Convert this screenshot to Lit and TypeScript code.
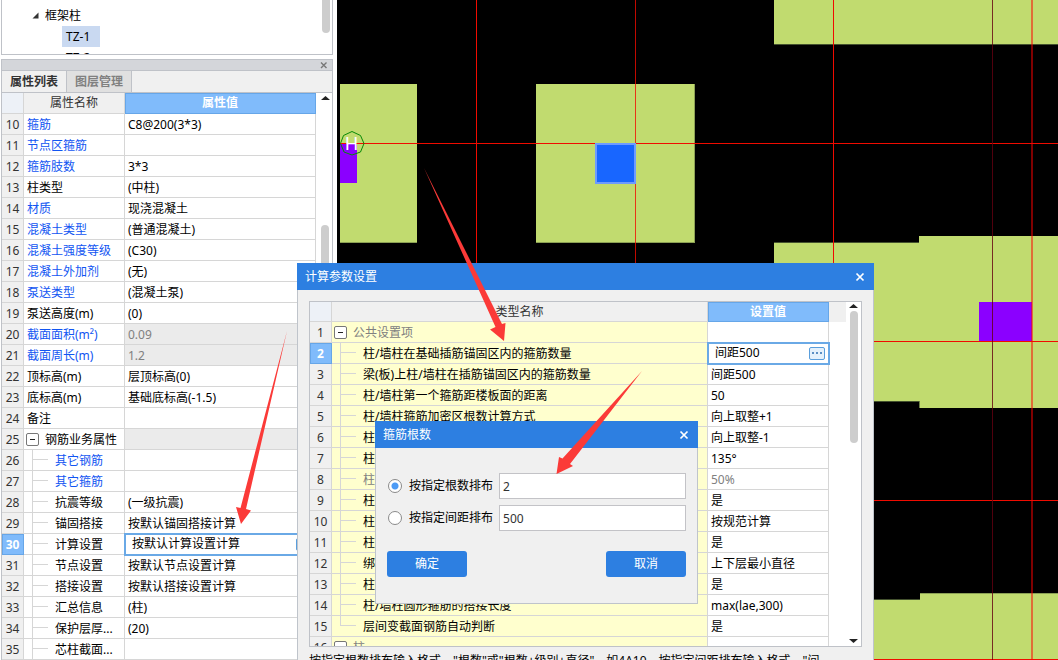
import { LitElement, html, css, svg, nothing } from "lit";
import { customElement, property } from "lit/decorators.js";
import { classMap } from "lit/directives/class-map.js";

interface Row {
  n: number;
  name: string;
  value?: string;
  link?: boolean;
  locked?: boolean;
  group?: boolean;
  child?: boolean;
  last?: boolean;
  muted?: boolean;
  selected?: boolean;
}

const PROPERTIES: Row[] = [
  { n: 10, name: "箍筋", value: "C8@200(3*3)", link: true },
  { n: 11, name: "节点区箍筋", link: true },
  { n: 12, name: "箍筋肢数", value: "3*3", link: true },
  { n: 13, name: "柱类型", value: "(中柱)" },
  { n: 14, name: "材质", value: "现浇混凝土", link: true },
  { n: 15, name: "混凝土类型", value: "(普通混凝土)", link: true },
  { n: 16, name: "混凝土强度等级", value: "(C30)", link: true },
  { n: 17, name: "混凝土外加剂", value: "(无)", link: true },
  { n: 18, name: "泵送类型", value: "(混凝土泵)", link: true },
  { n: 19, name: "泵送高度(m)", value: "(0)" },
  { n: 20, name: "截面面积(m²)", value: "0.09", link: true, locked: true },
  { n: 21, name: "截面周长(m)", value: "1.2", link: true, locked: true },
  { n: 22, name: "顶标高(m)", value: "层顶标高(0)" },
  { n: 23, name: "底标高(m)", value: "基础底标高(-1.5)" },
  { n: 24, name: "备注" },
  { n: 25, name: "钢筋业务属性", group: true, locked: true },
  { n: 26, name: "其它钢筋", link: true, child: true },
  { n: 27, name: "其它箍筋", link: true, child: true },
  { n: 28, name: "抗震等级", value: "(一级抗震)", child: true },
  { n: 29, name: "锚固搭接", value: "按默认锚固搭接计算", child: true },
  { n: 30, name: "计算设置", value: "按默认计算设置计算", child: true, selected: true },
  { n: 31, name: "节点设置", value: "按默认节点设置计算", child: true },
  { n: 32, name: "搭接设置", value: "按默认搭接设置计算", child: true },
  { n: 33, name: "汇总信息", value: "(柱)", child: true },
  { n: 34, name: "保护层厚...", value: "(20)", child: true },
  { n: 35, name: "芯柱截面...", child: true },
];

const SETTINGS: Row[] = [
  { n: 1, name: "公共设置项", group: true, muted: true },
  { n: 2, name: "柱/墙柱在基础插筋锚固区内的箍筋数量", value: "间距500", child: true, selected: true },
  { n: 3, name: "梁(板)上柱/墙柱在插筋锚固区内的箍筋数量", value: "间距500", child: true },
  { n: 4, name: "柱/墙柱第一个箍筋距楼板面的距离", value: "50", child: true },
  { n: 5, name: "柱/墙柱箍筋加密区根数计算方式", value: "向上取整+1", child: true },
  { n: 6, name: "柱", value: "向上取整-1", child: true },
  { n: 7, name: "柱", value: "135°", child: true },
  { n: 8, name: "柱", value: "50%", child: true, muted: true },
  { n: 9, name: "柱", value: "是", child: true },
  { n: 10, name: "柱", value: "按规范计算", child: true },
  { n: 11, name: "柱", value: "是", child: true },
  { n: 12, name: "绑", value: "上下层最小直径", child: true },
  { n: 13, name: "柱", value: "是", child: true },
  { n: 14, name: "柱/墙柱圆形箍筋的搭接长度", value: "max(lae,300)", child: true },
  { n: 15, name: "层间变截面钢筋自动判断", value: "是", child: true, last: true },
  { n: 16, name: "柱", group: true, muted: true },
];

const base = css`
  * {
    box-sizing: border-box;
  }
  button,
  input {
    font: inherit;
    color: inherit;
    margin: 0;
    padding: 0;
    border: 0;
    background: none;
  }
`;

@customElement("grid-table")
export class GridTable extends LitElement {
  @property({ attribute: false }) rows: Row[] = [];
  @property() nameTitle = "";
  @property() valueTitle = "";
  @property({ reflect: true }) kind = "props";

  static styles = [
    base,
    css`
      :host {
        display: block;
        min-width: 0;
      }
      table {
        width: 100%;
        table-layout: fixed;
        border-spacing: 0;
      }
      .c-num {
        width: 22px;
      }
      .c-value {
        width: 191px;
      }
      :host([kind="settings"]) .c-value {
        width: 121px;
      }
      th,
      td {
        height: 21px;
        padding: 0;
        line-height: 20px;
        font-weight: 400;
        text-align: left;
        white-space: nowrap;
        overflow: hidden;
        border-right: 1px solid #d6d6d6;
        border-bottom: 1px solid #d6d6d6;
        background: #fff;
      }
      thead th {
        text-align: center;
        color: #333;
        background: #f0f0f0;
      }
      :host([kind="settings"]) thead th {
        height: 20px;
        line-height: 19px;
      }
      thead .corner {
        background: #edf1f7;
      }
      thead .value {
        color: #fff;
        font-weight: 700;
        background: #80bbfb;
        box-shadow: inset 1px 1px 0 #66a6e8;
        border-color: #66a6e8;
      }
      .num {
        padding-top: 2px;
        line-height: 18px;
        text-align: center;
        color: #333;
        background: #f0f0f0;
      }
      .num.selected {
        color: #fff;
        font-weight: 700;
        background: #80bbfb;
        box-shadow: inset 1px 1px 0 #66a6e8;
        border-color: #66a6e8;
      }
      .inner {
        display: flex;
        align-items: center;
        height: 20px;
        padding-left: 3px;
      }
      .text {
        padding-top: 2px;
        line-height: 18px;
      }
      :host([kind="settings"]) .name {
        background: #ffffce;
      }
      .link {
        color: #1155f2;
      }
      .muted,
      .value.locked {
        color: #808080;
      }
      .value.locked {
        background: #ebebeb;
      }
      .name .group {
        gap: 6px;
        padding-left: 2px;
      }
      .name .child {
        padding-left: 8px;
      }
      .branch {
        flex: none;
        width: 16px;
        height: 20px;
        margin-right: 7px;
        background: linear-gradient(#d6d6d6, #d6d6d6) 0 9px / 16px 1px no-repeat;
        border-left: 1px solid #d6d6d6;
      }
      .branch.last {
        height: 10px;
        align-self: flex-start;
      }
      .toggle {
        flex: none;
        width: 13px;
        height: 13px;
        border: 1px solid #777;
        border-radius: 2px;
        background: linear-gradient(#222, #222) center / 5px 1px no-repeat #fff;
      }
      td.value.selected {
        overflow: visible;
        outline: 2px solid #6aa9e6;
        outline-offset: -1px;
      }
      .editor {
        flex: 1;
        min-width: 0;
        height: 18px;
        padding-left: 4px;
        outline: none;
      }
      .more {
        display: flex;
        flex: none;
        align-items: center;
        justify-content: center;
        gap: 2px;
        width: 16px;
        height: 13px;
        margin-right: 3px;
        border: 1px solid #5a9edc;
        border-radius: 2px;
        background: #e4f1fc;
      }
      .more i {
        width: 2px;
        height: 2px;
        background: #5b8fc4;
      }
    `,
  ];

  private renderRow(r: Row) {
    return html`<tr>
      <td class=${classMap({ num: true, selected: !!r.selected })}>${r.n}</td>
      <td class="name">
        <div
          class=${classMap({
            inner: true,
            group: !!r.group,
            child: !!r.child,
            link: !!r.link,
            muted: !!r.muted,
          })}
        >
          ${r.group ? html`<button class="toggle" aria-label="折叠"></button>` : nothing}
          ${r.child ? html`<span class=${classMap({ branch: true, last: !!r.last })}></span>` : nothing}<span
            class="text"
            >${r.name}</span
          >
        </div>
      </td>
      <td class=${classMap({ value: true, locked: !!r.locked, selected: !!r.selected, muted: !!r.muted })}>
        <div class="inner">
          ${r.selected
            ? html`<input class="editor" type="text" aria-label=${r.name} .value=${r.value ?? ""} />
                <button class="more" aria-label="更多"><i></i><i></i><i></i></button>`
            : html`<span class="text">${r.value ?? nothing}</span>`}
        </div>
      </td>
    </tr>`;
  }

  render() {
    return html`<table>
      <colgroup>
        <col class="c-num" />
        <col />
        <col class="c-value" />
      </colgroup>
      <thead>
        <tr>
          <th class="corner"></th>
          <th>${this.nameTitle}</th>
          <th class="value">${this.valueTitle}</th>
        </tr>
      </thead>
      <tbody>
        ${this.rows.map((r) => this.renderRow(r))}
      </tbody>
    </table>`;
  }
}

@customElement("dialog-window")
export class DialogWindow extends LitElement {
  @property() heading = "";

  static styles = [
    base,
    css`
      :host {
        display: flex;
        flex-direction: column;
        background: #f0f0f0;
      }
      .bar {
        display: flex;
        flex: none;
        align-items: center;
        justify-content: space-between;
        height: 27px;
        padding: 0 8px;
        color: #fff;
        background: #2d7fe1;
      }
      .close {
        display: flex;
        align-items: center;
        justify-content: center;
        width: 12px;
        height: 12px;
      }
      .body {
        flex: 1;
        min-height: 0;
        border: 1px solid #bfc4cb;
        border-top: 0;
      }
    `,
  ];

  render() {
    return html`<div class="bar">
        <span>${this.heading}</span>
        <button class="close" aria-label="关闭">
          <svg width="10" height="10" viewBox="0 0 10 10">
            <path d="M1.5 1.5 8.5 8.5M8.5 1.5 1.5 8.5" stroke="#fff" stroke-width="1.7" />
          </svg>
        </button>
      </div>
      <div class="body"><slot></slot></div>`;
  }
}

@customElement("model-canvas")
export class ModelCanvas extends LitElement {
  static styles = css`
    :host {
      display: block;
      background: #000;
      overflow: hidden;
    }
    svg {
      display: block;
      width: 100%;
      height: 100%;
    }
    .slab {
      fill: #c1db6f;
    }
    .edge {
      fill: #55663a;
    }
    .column {
      fill: #8b00ff;
    }
    .axis {
      fill: #f00b00;
    }
    .dim {
      fill: #640010;
      opacity: 0.8;
    }
    .half {
      fill: #ff0000;
      opacity: 0.5;
    }
    .picked {
      fill: #1866ff;
      stroke: #6d9bff;
      stroke-width: 2;
    }
    .mark {
      fill: none;
      stroke: #078a07;
    }
    .letter {
      fill: #fff;
      font: 400 18px "Liberation Sans", sans-serif;
    }
  `;

  render() {
    return html`<svg shape-rendering="crispEdges" aria-label="模型视图">
      ${svg`<g transform="translate(-337 0)">
        <path class="slab" d="M340 84h77v159h-77zM536 84h159v159h-159zM774 0h2000v44H774z" />
        <path class="slab" d="M774 243h145v-7h1855v172H919v-7H774zM774 600h146v-7h1854v400H774z" />
        <path class="edge" d="M774 44h2000v1H774zM774 242h145v1h-145zM873 401h46v1h-46zM919 401h1v7h-1zM873 599h47v1h-47z" opacity=".8" />
        <path class="edge" d="M340 242h77v1h-77zM536 242h159v1h-159zM694 84h1v158h-1zM920 593h1854v1H920z" opacity=".5" />
        <path class="column" d="M340 144h17v39h-17zM979 302h53v39h-53zM979 659h53v39h-53z" />
        <path class="axis" d="M476 0h1v900h-1zM833 0h1v300h-1zM340 143h2400v1H340zM873 341h1900v1H873zM873 500h1900v1H873zM873 659h1900v1H873z" />
        <path class="axis" d="M635 0h1v900h-1z" opacity=".8" />
        <path class="dim" d="M992 0h1v2000h-1z" />
        <path class="half" d="M1031 0h2v2000h-2z" />
        <rect class="picked" x="596" y="144" width="39" height="39" />
        <path class="mark" shape-rendering="auto" d="M352 131.500 360.500 135.500 364 143.500 360.500 152 352 155 344 152 340.500 143.500 343.500 135.500Z" />
        <text class="letter" x="345" y="150">H</text>
      </g>`}
    </svg>`;
  }
}

@customElement("app-root")
export class AppRoot extends LitElement {
  static styles = [
    base,
    css`
      :host {
        display: grid;
        grid-template-columns: 337px minmax(0, 1fr);
        position: relative;
        height: 100vh;
        overflow: hidden;
        font: 12px/20px "Noto Sans", "Noto Sans CJK SC", sans-serif;
        color: #000;
        background: #fff;
      }
      .side {
        display: flex;
        flex-direction: column;
        gap: 4px;
        min-height: 0;
        padding: 0 4px 0 1px;
      }
      .tree {
        display: flex;
        flex: none;
        justify-content: space-between;
        height: 55px;
        padding-right: 2px;
        overflow: hidden;
        border: 1px solid #bfc2c8;
        border-top: 0;
      }
      .tree ul {
        margin: 0;
        padding: 5px 0 0 30px;
        list-style: none;
      }
      .tree li {
        display: flex;
        align-items: center;
        gap: 6px;
        height: 21px;
      }
      .leaf {
        margin-left: 30px;
        padding: 0 10px 0 4px;
        line-height: 21px;
      }
      .leaf.active {
        background: #c9d9f1;
      }
      .thumb {
        width: 8px;
        border-radius: 4px;
        background: #cdcdcd;
      }
      .tree .thumb {
        height: 33px;
        border-radius: 0 0 4px 4px;
      }
      .panel {
        display: flex;
        flex: 1;
        flex-direction: column;
        min-height: 0;
        border: 1px solid #bfc2c8;
        border-bottom: 0;
      }
      .caption {
        display: flex;
        flex: none;
        align-items: center;
        justify-content: flex-end;
        height: 10px;
        padding-right: 4px;
        background: #d4d6da;
      }
      .caption button {
        display: flex;
      }
      .tabs {
        display: flex;
        flex: none;
        height: 23px;
        border-top: 1px solid #bfc2c8;
        border-bottom: 1px solid #bfc2c8;
        background: #f0f0f0;
      }
      .tab {
        padding: 0 8px;
        border-right: 1px solid #bfc2c8;
        line-height: 21px;
        font-weight: 700;
        color: #333;
      }
      .tab.off {
        color: #808080;
        background: #e0e0e0;
      }
      .scroll {
        display: flex;
        flex: 1;
        min-height: 0;
        overflow: hidden;
      }
      .scroll grid-table {
        flex: 1;
      }
      .rail {
        display: flex;
        flex: none;
        flex-direction: column;
        align-items: center;
        width: 16px;
        padding: 3px 0 0 2px;
      }
      .rail .low {
        height: 160px;
        margin-top: 125px;
      }
      .params {
        position: absolute;
        top: 263px;
        left: 297px;
        width: 577px;
        height: 440px;
      }
      .frame {
        display: flex;
        height: 346px;
        margin: 11px 11px 0;
        overflow: hidden;
        border: 1px solid #bfc2c8;
        background: #fff;
      }
      .frame grid-table {
        flex: 1;
      }
      .spacer {
        width: 17px;
        height: 20px;
        background: #f0f0f0;
      }
      .frame .rail {
        justify-content: space-between;
        width: 15px;
        padding: 2px 0 3px;
      }
      .frame .group {
        display: flex;
        flex-direction: column;
        align-items: center;
        gap: 3px;
      }
      .frame .thumb {
        height: 132px;
      }
      .hint {
        margin: 4px 11px 0;
        white-space: nowrap;
        overflow: hidden;
      }
      .count {
        position: absolute;
        top: 421px;
        left: 375px;
        width: 323px;
      }
      .form {
        display: grid;
        grid-template-columns: auto minmax(0, 1fr);
        align-items: center;
        gap: 6px;
        padding: 25px 11px 26px;
      }
      .option {
        display: flex;
        align-items: center;
        gap: 7px;
        height: 26px;
        padding-left: 1px;
      }
      .radio {
        appearance: none;
        width: 14px;
        height: 14px;
        border: 1px solid #8a8a8a;
        border-radius: 50%;
        background: #fff;
      }
      .radio:checked {
        background: radial-gradient(circle, #4d9bf5 3px, #fff 4px);
      }
      .field {
        width: 100%;
        height: 26px;
        padding: 0 3px;
        border: 1px solid #c3c3c7;
        color: #333;
        background: #fff;
      }
      .actions {
        display: flex;
        grid-column: 1 / -1;
        justify-content: space-between;
        padding-top: 14px;
      }
      .action {
        width: 80px;
        height: 26px;
        border-radius: 3px;
        color: #fff;
        background: #2d7fe1;
      }
      .arrows {
        position: absolute;
        top: 0;
        left: 0;
        width: 100%;
        height: 100%;
        pointer-events: none;
      }
    `,
  ];

  render() {
    return html`
      <aside class="side">
        <div class="tree">
          <ul>
            <li>
              <svg width="7" height="7" viewBox="0 0 7 7"><path d="M6.500 0.500V6.500H0.500Z" fill="#333" /></svg>
              框架柱
            </li>
            <li><span class="leaf active">TZ-1</span></li>
            <li><span class="leaf">TZ-2</span></li>
          </ul>
          <div class="thumb"></div>
        </div>
        <section class="panel">
          <div class="caption">
            <button aria-label="关闭">
              <svg width="8" height="8" viewBox="0 0 8 8">
                <path d="M1 1.500 6.500 7M6.500 1.500 1 7" stroke="#777" stroke-width="1.400" />
              </svg>
            </button>
          </div>
          <div class="tabs">
            <button class="tab">属性列表</button>
            <button class="tab off">图层管理</button>
          </div>
          <div class="scroll">
            <grid-table nameTitle="属性名称" valueTitle="属性值" .rows=${PROPERTIES}></grid-table>
            <div class="rail">
              <svg width="9" height="4" viewBox="0 0 9 4"><path d="M4.500 0 9 4H0Z" fill="#222" /></svg>
              <div class="thumb low"></div>
            </div>
          </div>
        </section>
      </aside>
      <model-canvas></model-canvas>

      <dialog-window class="params" heading="计算参数设置">
        <div class="frame">
          <grid-table kind="settings" nameTitle="类型名称" valueTitle="设置值" .rows=${SETTINGS}></grid-table>
          <div class="spacer"></div>
          <div class="rail">
            <div class="group">
              <svg width="9" height="4" viewBox="0 0 9 4"><path d="M4.500 0 9 4H0Z" fill="#222" /></svg>
              <div class="thumb"></div>
            </div>
            <svg width="9" height="4" viewBox="0 0 9 4"><path d="M4.500 4 9 0H0Z" fill="#222" /></svg>
          </div>
        </div>
        <p class="hint">
          按指定根数排布输入格式，"根数"或"根数+级别+直径"，如4A10，按指定间距排布输入格式，"间
        </p>
      </dialog-window>

      <dialog-window class="count" heading="箍筋根数">
        <form class="form" @submit=${(e: Event) => e.preventDefault()}>
          <label class="option"><input class="radio" type="radio" name="mode" checked />按指定根数排布</label>
          <input class="field" type="text" aria-label="按指定根数排布" value="2" />
          <label class="option"><input class="radio" type="radio" name="mode" />按指定间距排布</label>
          <input class="field" type="text" aria-label="按指定间距排布" value="500" />
          <div class="actions">
            <button class="action" type="submit">确定</button>
            <button class="action" type="button">取消</button>
          </div>
        </form>
      </dialog-window>

      <svg class="arrows" fill="#fb3a38" aria-hidden="true">
        <path d="M424 168 502 324 505.500 323 504 341 490 329.500 495.500 327Z" />
        <path d="M287 331 246 509 251 510.500 241 524 236 507 240.500 508Z" />
        <path d="M642 371 570 464 573 466 556.500 474 559 457 562.500 458.500Z" />
      </svg>
    `;
  }
}
